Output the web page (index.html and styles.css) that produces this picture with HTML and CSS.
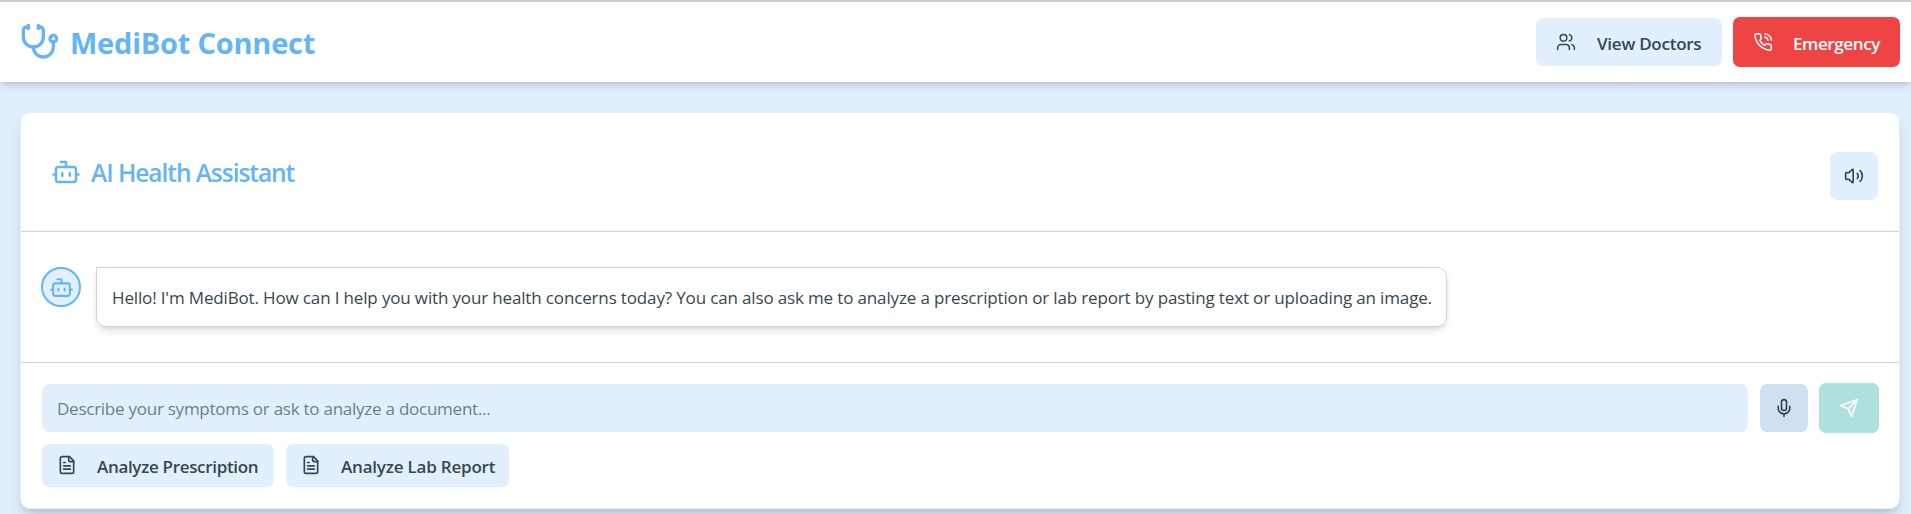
FILE: index.html
```html
<!DOCTYPE html>
<html lang="en">
<head>
<meta charset="utf-8">
<title>MediBot Connect</title>
<link rel="stylesheet" href="styles.css">
</head>
<body>
<svg class="sprite" width="0" height="0">
  <symbol id="bot" viewBox="0 0 24 24"><path d="M12 8V4H8"/><rect width="16" height="12" x="4" y="8" rx="2"/><path d="M2 14h2M20 14h2M15 13v2M9 13v2"/></symbol>
  <symbol id="file" viewBox="0 0 24 24"><path d="M15 2H6a2 2 0 0 0-2 2v16a2 2 0 0 0 2 2h12a2 2 0 0 0 2-2V7Z"/><path d="M14 2v4a2 2 0 0 0 2 2h4M10 9H8M16 13H8M16 17H8"/></symbol>
</svg>
<header class="topbar">
  <div class="brand">
    <svg class="icon brand-icon" viewBox="0 0 24 24"><path d="M11 2v2M5 2v2M5 3H4a2 2 0 0 0-2 2v4a6 6 0 0 0 12 0V5a2 2 0 0 0-2-2h-1"/><path d="M8 15a6 6 0 0 0 12 0v-3"/><circle cx="20" cy="10" r="2"/></svg>
    <h1 class="brand-name">MediBot Connect</h1>
  </div>
  <nav class="actions">
    <button class="btn btn-doctors"><svg class="icon" viewBox="0 0 24 24"><path d="M16 21v-2a4 4 0 0 0-4-4H6a4 4 0 0 0-4 4v2"/><circle cx="9" cy="7" r="4"/><path d="M22 21v-2a4 4 0 0 0-3-3.87M16 3.13a4 4 0 0 1 0 7.75"/></svg><span>View Doctors</span></button>
    <button class="btn btn-emergency"><svg class="icon" viewBox="0 0 24 24"><path d="M22 16.92v3a2 2 0 0 1-2.18 2 19.79 19.79 0 0 1-8.63-3.07 19.5 19.5 0 0 1-6-6 19.79 19.79 0 0 1-3.07-8.67A2 2 0 0 1 4.11 2h3a2 2 0 0 1 2 1.72 12.84 12.84 0 0 0 .7 2.81 2 2 0 0 1-.45 2.11L8.09 9.91a16 16 0 0 0 6 6l1.27-1.27a2 2 0 0 1 2.11-.45 12.84 12.84 0 0 0 2.81.7A2 2 0 0 1 22 16.92z"/><path d="M14.05 2a9 9 0 0 1 8 7.94M14.05 6A5 5 0 0 1 18 10"/></svg><span>Emergency</span></button>
  </nav>
</header>
<main class="page">
  <section class="card">
    <div class="card-head">
      <h2 class="card-title"><svg class="icon title-icon"><use href="#bot"/></svg><span>AI Health Assistant</span></h2>
      <button class="square sound" aria-label="Sound"><svg class="icon" viewBox="0 0 24 24"><path d="M11 4.702a.705.705 0 0 0-1.203-.498L6.413 7.587A1.4 1.4 0 0 1 5.416 8H3a1 1 0 0 0-1 1v6a1 1 0 0 0 1 1h2.416a1.4 1.4 0 0 1 .997.413l3.383 3.384A.705.705 0 0 0 11 19.298z"/><path d="M16 9a5 5 0 0 1 0 6M19.364 18.364a9 9 0 0 0 0-12.728"/></svg></button>
    </div>
    <div class="messages">
      <div class="avatar"><svg class="icon"><use href="#bot"/></svg></div>
      <div class="bubble"><p>Hello! I'm MediBot. How can I help you with your health concerns today? You can also ask me to analyze a prescription or lab report by pasting text or uploading an image.</p></div>
    </div>
    <div class="composer">
      <div class="input-row">
        <input class="field" type="text" placeholder="Describe your symptoms or ask to analyze a document...">
        <button class="square mic" aria-label="Record"><svg class="icon" viewBox="0 0 24 24"><path d="M12 2a3 3 0 0 0-3 3v7a3 3 0 0 0 6 0V5a3 3 0 0 0-3-3Z"/><path d="M19 10v2a7 7 0 0 1-14 0v-2M12 19v3"/></svg></button>
        <button class="send" aria-label="Send"><svg class="icon" viewBox="0 0 24 24"><path d="m22 2-7 20-4-9-9-4Z"/><path d="M22 2 11 13"/></svg></button>
      </div>
      <div class="quick-row">
        <button class="quick prescription"><svg class="icon"><use href="#file"/></svg><span>Analyze Prescription</span></button>
        <button class="quick report"><svg class="icon"><use href="#file"/></svg><span>Analyze Lab Report</span></button>
      </div>
    </div>
  </section>
</main>
</body>
</html>
```
FILE: styles.css
```css
* { box-sizing: border-box; }
body {
  margin: 0;
  height: 514px;
  overflow: hidden;
  background: #e2f0fe;
  color: #37474f;
  font-family: "Open Sans", "Noto Sans", sans-serif;
  font-size: 17px;
}
h1, h2, p { margin: 0; }
button { border: 0; padding: 0; font: inherit; color: inherit; }
.sprite { position: absolute; }
.icon { width: 20px; height: 20px; flex: none; fill: none; stroke: currentColor; stroke-width: 2; stroke-linecap: round; stroke-linejoin: round; }
span, p { white-space: nowrap; }

.topbar {
  display: flex;
  justify-content: space-between;
  align-items: center;
  height: 82px;
  padding: 0 11px 0 20px;
  border-top: 2px solid #cbcbcb;
  background: #fff;
  box-shadow: 0 5px 8px -1px rgba(0, 0, 0, .14), 0 2px 5px -2px rgba(0, 0, 0, .12);
}
.brand { display: flex; align-items: center; gap: 10px; color: #64b5f6; }
.brand-icon { width: 40px; height: 40px; }
.brand-name { font-size: 29px; line-height: 40px; font-weight: 700; padding-top: 2px; letter-spacing: -.22px; }
.actions { display: flex; align-items: center; gap: 11px; }
.btn { display: flex; align-items: center; border-radius: 7px; padding-left: 20px; font-weight: 600; }
.btn .icon { stroke-width: 1.8; margin-bottom: 1px; }
.btn span { margin-left: 20px; padding-top: 2px; }
.btn-doctors { width: 186px; height: 48px; background: #e2f0fe; letter-spacing: -.25px; }
.btn-doctors span { margin-left: 21px; }
.btn-emergency { width: 167px; height: 50px; background: #ef4444; color: #fff; letter-spacing: -.38px; }

.page { padding: 30px 11px 0 20px; }
.card {
  height: 397px;
  border: 1px solid #e2f0fe;
  border-radius: 10px;
  background: #fff;
  box-shadow: 0 12px 19px -4px rgba(0, 0, 0, .14), 0 5px 8px -4px rgba(0, 0, 0, .14);
}
.card-head { display: flex; justify-content: space-between; height: 119px; padding: 39px 21px 0 30px; border-bottom: 1px solid #c3d9ed; }
.card-title { display: flex; gap: 10px; height: 40px; font-size: 24.5px; line-height: 42px; letter-spacing: -1.05px; font-weight: 600; color: #64b5f6; }
.title-icon { width: 30px; height: 30px; margin-top: 5px; }
.square { display: flex; align-items: center; justify-content: center; width: 48px; height: 48px; border-radius: 7px; background: #e2f0fe; }
.messages { display: flex; gap: 15px; height: 131px; padding: 35px 20px 0; border-bottom: 1px solid #c3d9ed; }
.avatar { display: flex; align-items: center; justify-content: center; width: 40px; height: 40px; border: 2px solid #64b5f6; border-radius: 50%; background: #e2f0fe; color: #64b5f6; }
.avatar .icon { width: 25px; height: 25px; }
.bubble {
  width: 1351px;
  height: 60px;
  padding: 17px 15px;
  line-height: 26px;
  letter-spacing: -.15px;
  border: 1px solid #c3d9ed;
  border-radius: 0 10px 10px;
  box-shadow: 0 5px 8px -1px rgba(0, 0, 0, .1), 0 2px 5px -2px rgba(0, 0, 0, .1);
}
.composer { padding: 20px 20px 0 21px; }
.input-row { display: flex; align-items: center; gap: 11px; height: 50px; }
.field { flex: 1; height: 48px; margin-right: 1px; padding: 0 15px; border: 0; border-radius: 7px; background: #e2f0fe; font: inherit; letter-spacing: -.25px; }
.field::placeholder { color: #68808c; opacity: 1; }
.mic { background: #cfe1f3; }
.send { display: flex; align-items: center; justify-content: center; width: 60px; height: 50px; border-radius: 7px; background: #afe1dc; color: #fff; }
.quick-row { display: flex; gap: 12px; margin-top: 11px; }
.quick { display: flex; height: 43px; border-radius: 7px; padding: 11px 0 0 15px; background: #e2f0fe; font-weight: 600; line-height: 24px; }
.quick span { margin-left: 20px; }
.prescription { width: 232px; letter-spacing: -.32px; }
.report { width: 223px; letter-spacing: -.2px; }
```
